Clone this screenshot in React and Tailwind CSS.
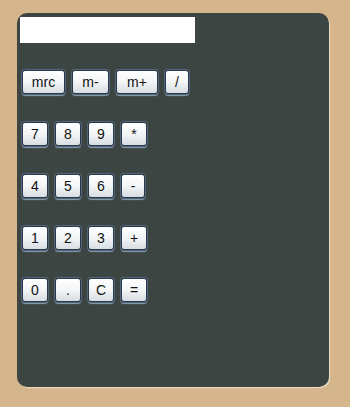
const rows = [
  [
    { label: 'mrc', w: 'w-[43px]' },
    { label: 'm-', w: 'w-[37px]' },
    { label: 'm+', w: 'w-[42px]' },
    { label: '/', w: 'w-[24px]' }
  ],
  [
    { label: '7', w: 'w-[26px]' },
    { label: '8', w: 'w-[26px]' },
    { label: '9', w: 'w-[26px]' },
    { label: '*', w: 'w-[26px]' }
  ],
  [
    { label: '4', w: 'w-[26px]' },
    { label: '5', w: 'w-[26px]' },
    { label: '6', w: 'w-[26px]' },
    { label: '-', w: 'w-[24px]' }
  ],
  [
    { label: '1', w: 'w-[26px]' },
    { label: '2', w: 'w-[26px]' },
    { label: '3', w: 'w-[26px]' },
    { label: '+', w: 'w-[26px]' }
  ],
  [
    { label: '0', w: 'w-[26px]' },
    { label: '.', w: 'w-[26px]' },
    { label: 'C', w: 'w-[26px]' },
    { label: '=', w: 'w-[26px]' }
  ]
];

const App = () => {
  return (
    <div className="h-[407px] w-[350px] bg-[#d5b58c] pt-[13px] pl-[17px] font-['Liberation_Sans',Arial,sans-serif]">
      {/* Calculator body */}
      <div className="w-[312px] h-[374px] rounded-[10px] bg-[#3c4541] pt-[4px] pl-[3px] shadow-[1px_1px_1px_#efe2c8]">
        <input
          type="text"
          className="block w-[175px] h-[26px] bg-white border-0 outline-none px-1 text-[14px]"
        />
        <div className="flex flex-col gap-[28px] mt-[27px] pl-[2px]">
          {rows.map((row, i) => (
            <div key={i} className="flex gap-[7px]">
              {row.map((btn) => (
                <button
                  key={btn.label}
                  className={`${btn.w} h-[24px] flex items-center justify-center rounded-[3px] border border-[#2a3a49] bg-gradient-to-b from-white via-[#f3f5f6] to-[#d6dde3] text-[14px] leading-none text-[#111] shadow-[0_0_0_1px_#51667a,0_2px_1px_#8aa0b2,inset_0_1px_0_#ffffff]`}
                >
                  {btn.label}
                </button>
              ))}
            </div>
          ))}
        </div>
      </div>
    </div>
  );
};

export default App;
